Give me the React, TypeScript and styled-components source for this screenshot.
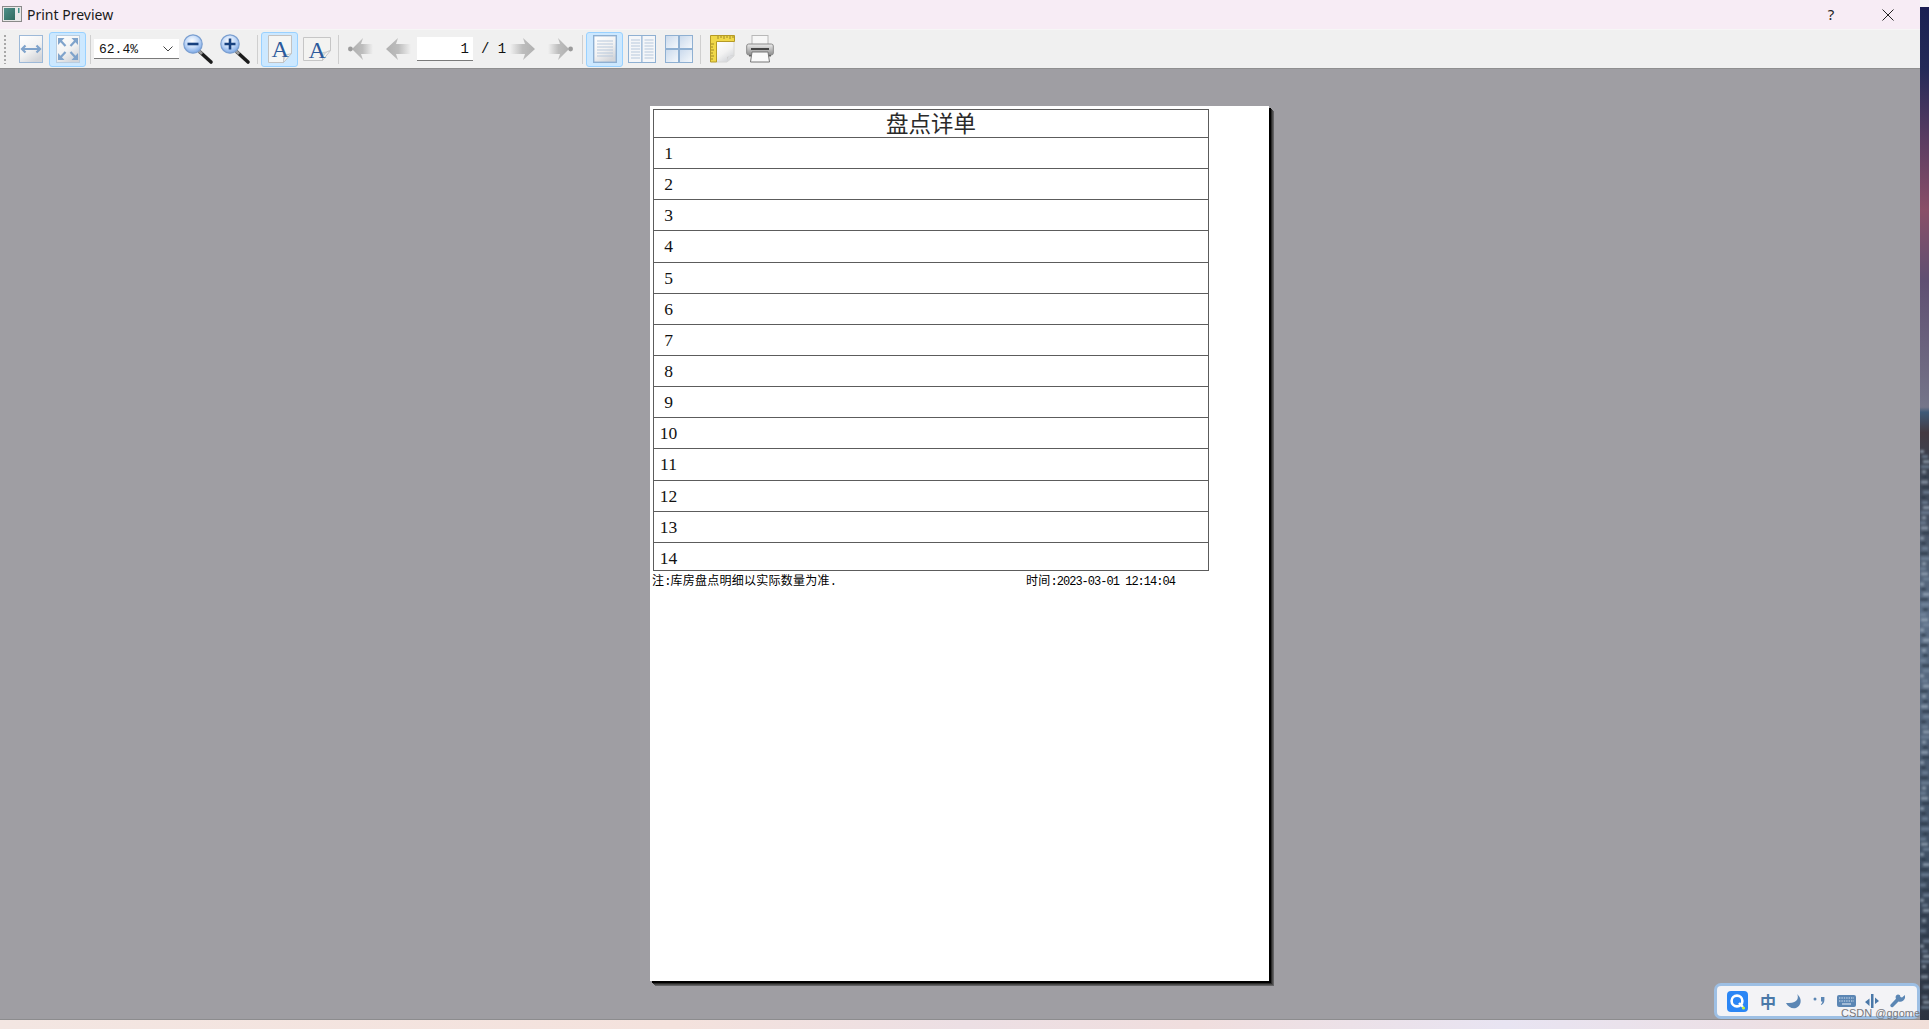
import React from "react";
import styled, { createGlobalStyle } from "styled-components";

const Global = createGlobalStyle`
  html, body { margin: 0; padding: 0; background: #f6f6f6; overflow: hidden; }
  #root { width: 1929px; height: 1029px; }
`;

const Desktop = styled.div`
  display: grid;
  grid-template-columns: 1920px 9px;
  grid-template-rows: 1020px 9px;
  width: 1929px;
  height: 1029px;
  position: relative;
  overflow: hidden;
`;
const Window = styled.div`
  display: flex;
  flex-direction: column;
  min-width: 0;
`;
const TitleBar = styled.div`
  flex: 0 0 29px;
  display: flex;
  align-items: center;
  background: #f7ecf5;
  padding-left: 2px;
  font: 14px/29px "Noto Sans", sans-serif;
  color: #1a1a1a;
`;
const TitleText = styled.span`
  margin-left: 5px;
  flex: 1;
`;
const TitleButton = styled.div<{ $w: number }>`
  width: ${(p) => p.$w}px;
  height: 29px;
  display: flex;
  align-items: center;
  justify-content: center;
  font-size: 15px;
  color: #222;
`;
const Toolbar = styled.div`
  flex: 0 0 auto;
  height: 38px;
  margin-top: 1px;
  display: flex;
  align-items: center;
  background: #f0f0f0;
  padding-left: 4px;
  border-bottom: 1px solid #8f8f90;
`;
const Grip = styled.div`
  width: 2px;
  height: 29px;
  margin-right: 6px;
  background: repeating-linear-gradient(to bottom, #a8a8a8 0 2px, transparent 2px 4px);
`;
const ToolButton = styled.div<{ $active?: boolean }>`
  width: 37px;
  height: 35px;
  box-sizing: border-box;
  display: flex;
  align-items: center;
  justify-content: center;
  border-radius: 3px;
  border: 1px solid ${(p) => (p.$active ? "#99d1ff" : "transparent")};
  background: ${(p) => (p.$active ? "#cce8ff" : "transparent")};
`;
const Separator = styled.div<{ $w: number }>`
  width: ${(p) => p.$w}px;
  height: 29px;
  display: flex;
  justify-content: center;
  &::before {
    content: "";
    width: 1px;
    background: #cfcfcf;
  }
`;
const Combo = styled.div`
  width: 85px;
  height: 20px;
  box-sizing: border-box;
  display: flex;
  align-items: center;
  justify-content: space-between;
  padding: 1px 6px 0 5px;
  background: #fff;
  border-bottom: 1px solid #7a7a7a;
  font: 13px "Liberation Mono", monospace;
  color: #111;
`;
const PageField = styled.div`
  width: 56px;
  height: 24px;
  box-sizing: border-box;
  margin-left: 1px;
  padding-right: 4px;
  background: #fff;
  border-bottom: 1px solid #7a7a7a;
  text-align: right;
  font: 14px/24px "Liberation Mono", monospace;
  color: #111;
`;
const PageCount = styled.div`
  width: 31px;
  box-sizing: border-box;
  padding-left: 8px;
  font: 14px "Liberation Mono", monospace;
  color: #111;
  white-space: pre;
`;
const Viewport = styled.div`
  flex: 1;
  display: flex;
  justify-content: center;
  align-items: flex-start;
  padding-top: 37px;
  background: #9f9ea3;
  box-shadow: inset 0 -1px 0 #8c8c8e;
`;
const Paper = styled.div`
  width: 619px;
  height: 875px;
  box-sizing: border-box;
  padding: 3px 0 0 3px;
  margin-right: 1px;
  background: #fff;
  box-shadow: 2px 2px 0 #000, 3px 3px 0 #2a2a2a, 4px 4px 0 #4a4a4a, 5px 5px 0 #636365;
`;
const Sheet = styled.div`
  width: 556px;
  box-sizing: border-box;
  border: 1px solid #5c5c5c;
  font-family: "Liberation Serif", "Noto Sans CJK SC", serif;
  color: #111;
`;
const SheetTitle = styled.div`
  height: 27px;
  text-align: center;
  font: 22.5px/24px "Noto Sans CJK SC", sans-serif;
  color: #2a2a2a;
`;
const Row = styled.div<{ $last?: boolean }>`
  height: ${(p) => (p.$last ? "28px" : "31.15px")};
  box-sizing: border-box;
  border-top: 1px solid #5c5c5c;
  overflow: hidden;
`;
const RowLabel = styled.div`
  width: 29px;
  text-align: center;
  font-size: 17.5px;
  line-height: 30px;
`;
const Footnotes = styled.div`
  display: grid;
  grid-template-columns: 374px auto;
  justify-content: start;
  height: 20px;
  margin-left: -1px;
  align-items: center;
  color: #000;
`;
const Note = styled.div`
  display: flex;
  align-items: baseline;
  white-space: pre;
`;
const NoteCjk = styled.span`
  font: 12px/16px "Noto Sans CJK SC", sans-serif;
  letter-spacing: 0.25px;
`;
const NoteMono = styled.span`
  font: 12px/16px "Liberation Mono", monospace;
  letter-spacing: -0.98px;
`;
const Wallpaper = styled.div`
  margin-top: 7px;
  overflow: hidden;
`;
const WallpaperArt = styled.svg`
  display: block;
`;
const Taskbar = styled.div`
  grid-column: 1 / -1;
  background: linear-gradient(90deg, #f3e6e2 0%, #f4e2dd 35%, #ecdfe4 50%, #f0dede 62%, #e8e4f2 78%, #ece0e6 90%, #f1dfd9 100%);
`;
const ImeBar = styled.div`
  position: absolute;
  left: 1714px;
  top: 983px;
  width: 206px;
  height: 36px;
  box-sizing: border-box;
  display: flex;
  align-items: center;
  padding-left: 10px;
  background: #f3f3f6;
  border: 3px solid #9dbfe4;
  border-radius: 7px;
`;
const ImeLogoSlot = styled.div`
  margin-right: 5px;
  display: flex;
`;
const ImeItem = styled.div<{ $w: number }>`
  width: ${(p) => p.$w}px;
  display: flex;
  justify-content: center;
  align-items: center;
  font: 700 16px "Noto Sans CJK SC", sans-serif;
  color: #4a78a8;
`;
const Watermark = styled.div`
  position: absolute;
  left: 124px;
  top: 21px;
  font: 11px/13px "Liberation Sans", sans-serif;
  color: #77777c;
  white-space: nowrap;
`;

const Ico = styled.svg`
  display: block;
  overflow: visible;
`;

const Defs = () => (
  <svg width="0" height="0" style={{ position: "absolute" }}>
    <defs>
      <linearGradient id="pageG" x1="0" y1="0" x2="0.6" y2="1">
        <stop offset="0" stopColor="#ffffff" />
        <stop offset="0.6" stopColor="#f2f2f2" />
        <stop offset="1" stopColor="#d4d6da" />
      </linearGradient>
      <linearGradient id="cellG" x1="0" y1="0" x2="1" y2="1">
        <stop offset="0" stopColor="#c9d9ec" />
        <stop offset="1" stopColor="#f6f9fc" />
      </linearGradient>
      <linearGradient id="greyL" x1="0" y1="0" x2="1" y2="0">
        <stop offset="0" stopColor="#b0b0b0" />
        <stop offset="0.5" stopColor="#bdbdbd" />
        <stop offset="1" stopColor="#f0f0f0" />
      </linearGradient>
      <radialGradient id="lens" cx="0.45" cy="0.35" r="0.7">
        <stop offset="0" stopColor="#ffffff" />
        <stop offset="0.5" stopColor="#c4daf8" />
        <stop offset="1" stopColor="#6f9fe2" />
      </radialGradient>
      <linearGradient id="winG" x1="0" y1="0" x2="1" y2="1">
        <stop offset="0" stopColor="#4f8f8a" />
        <stop offset="1" stopColor="#2f6a5e" />
      </linearGradient>
      <linearGradient id="printG" x1="0" y1="0" x2="0" y2="1">
        <stop offset="0" stopColor="#ececec" />
        <stop offset="1" stopColor="#8e8e8e" />
      </linearGradient>
      <filter id="soft" x="-10%" y="-10%" width="120%" height="120%">
        <feGaussianBlur stdDeviation="0.45" />
      </filter>
      <filter id="softer" x="-10%" y="-10%" width="120%" height="120%">
        <feGaussianBlur stdDeviation="0.3" />
      </filter>
      <filter id="seaBlur" x="-10%" y="-1%" width="120%" height="102%">
        <feGaussianBlur stdDeviation="0.8" />
      </filter>
    </defs>
  </svg>
);

const WindowIcon = () => (
  <Ico width="20" height="17" viewBox="0 0 20 17">
    <rect x="0.5" y="0.5" width="19" height="15" fill="#e8e8e8" stroke="#8a8a8a" />
    <rect x="2" y="2" width="11" height="12" fill="url(#winG)" />
    <rect x="16" y="2" width="1.5" height="5" fill="#3f8f88" />
  </Ico>
);

const FitWidthIcon = () => (
  <Ico width="24" height="28" viewBox="0 0 24 28" filter="url(#softer)">
    <rect x="0.5" y="0.5" width="23" height="27" fill="url(#pageG)" stroke="#9db9d8" />
    <path d="M3 14h18M6.500 10.500 3 14l3.500 3.500M17.500 10.500 21 14l-3.500 3.500" fill="none" stroke="#7fa3cb" strokeWidth="2.2" />
  </Ico>
);
const FitPageIcon = () => (
  <Ico width="24" height="28" viewBox="0 0 24 28" filter="url(#softer)">
    <rect x="0.5" y="0.5" width="23" height="27" fill="url(#pageG)" stroke="#b9cde0" />
    <path d="M3 4l6.500 7M21 4l-6.500 7M3 24l6.500-7M21 24l-6.500-7" fill="none" stroke="#7fa3cb" strokeWidth="2.2" />
    <path d="M2 3h6.500L2 10ZM22 3h-6.500L22 10ZM2 25h6.500L2 18ZM22 25h-6.500L22 18Z" fill="#7fa3cb" />
  </Ico>
);
const ZoomIcon = ({ plus }: { plus?: boolean }) => (
  <Ico width="31" height="30" viewBox="0 0 31 30">
    <path d="M18 18 29 28" stroke="#1c1c1c" strokeWidth="3.6" strokeLinecap="round" />
    <path d="M17 17 20 20" stroke="#9a9a9a" strokeWidth="3" />
    <circle cx="11" cy="10" r="9.2" fill="url(#lens)" stroke="#7b9fd0" strokeWidth="1.2" />
    <path d={plus ? "M5.500 10h11M11 4.500v11" : "M5.500 10h11"} stroke="#17417f" strokeWidth="2.6" />
  </Ico>
);
const serifA = { fontFamily: "'Liberation Serif', serif", fill: "#2b5a9c" } as const;
const PortraitIcon = () => (
  <Ico width="24" height="28" viewBox="0 0 24 28">
    <path d="M.5.5h23v18l-8 9H.5Z" fill="#f5f5f3" stroke="#c2c2c2" />
    <path d="M15.500 27.500c0-5 3-8 8-9-2 1-6 1-8 1Z" fill="#dcdcdc" stroke="#bdbdbd" strokeWidth=".6" />
    <text x="3.500" y="21.500" fontSize="24" style={serifA}>A</text>
  </Ico>
);
const LandscapeIcon = () => (
  <Ico width="28" height="24" viewBox="0 0 28 24">
    <path d="M.5.5h27v13l-8 10H.5Z" fill="#f3f3f1" stroke="#c6c6c6" />
    <path d="M19.500 23.500c0-5 3-9 8-10-2 1-6 2-8 2Z" fill="#dcdcdc" stroke="#bdbdbd" strokeWidth=".6" />
    <text x="5.500" y="20.500" fontSize="24" style={serifA}>A</text>
  </Ico>
);
const ArrowIcon = ({ dir, end }: { dir: "l" | "r"; end?: boolean }) => {
  const body = end
    ? "M4 11 15 0 13 6H25V16H13L15 22Z"
    : "M1 11 13 0 11 6H26V16H11L13 22Z";
  return (
    <Ico width="26" height="22" viewBox="0 0 26 22" filter="url(#soft)">
      <g transform={dir === "r" ? "matrix(-1 0 0 1 26 0)" : undefined}>
        <path d={body} fill="url(#greyL)" />
        {end && <circle cx="2.400" cy="11" r="2.400" fill="#9c9c9c" />}
      </g>
    </Ico>
  );
};
const lines = (x: number, w: number, ys: number[]) =>
  ys.map((y) => <path key={`${x}-${y}`} d={`M${x} ${y}h${w}`} stroke="#b7c8dc" strokeWidth="1" />);
const SingleIcon = () => (
  <Ico width="24" height="28" viewBox="0 0 24 28" filter="url(#softer)">
    <rect x="0.7" y="0.7" width="22.6" height="26.6" fill="url(#pageG)" stroke="#8fb0d2" strokeWidth="1.4" />
    {lines(4, 16, [6, 9, 12, 15, 18, 21])}
  </Ico>
);
const FacingIcon = () => (
  <Ico width="28" height="28" viewBox="0 0 28 28" filter="url(#softer)">
    <rect x="0.5" y="0.5" width="13.500" height="27" fill="#f4f6f9" stroke="#8fb0d2" />
    <rect x="14" y="0.5" width="13.500" height="27" fill="#f4f6f9" stroke="#8fb0d2" />
    {lines(3, 9, [5, 8, 11, 14, 17, 20, 23])}
    {lines(16.5, 9, [5, 8, 11, 14, 17, 20, 23])}
  </Ico>
);
const GridIcon = () => {
  const cells = [[0.5, 0.5], [14.5, 0.5], [0.5, 14.5], [14.5, 14.5]];
  return (
    <Ico width="28" height="28" viewBox="0 0 28 28" filter="url(#softer)">
      {cells.map(([x, y]) => (
        <rect key={`${x}${y}`} x={x} y={y} width="13" height="13" fill="url(#cellG)" stroke="#8fb0d2" />
      ))}
    </Ico>
  );
};
const SetupIcon = () => (
  <Ico width="25" height="28" viewBox="0 0 25 28" filter="url(#softer)">
    <path d="M6 6h18v15l-7 6H6Z" fill="url(#pageG)" stroke="#d8d8d8" />
    <path d="M17 27c0-4 2-7 7-7-1 1-5 1-7 2Z" fill="#cfcfcf" />
    <path d="M.5.5h24v6H6.500v20.500h-6Z" fill="#f0d84a" stroke="#b59a28" />
    <path d="M8 1v3M11 1v2M14 1v3M17 1v2M20 1v3M23 1v2M1 9h3M1 12h2M1 15h3M1 18h2M1 21h3M1 24h2" stroke="#8a7720" strokeWidth=".8" />
  </Ico>
);
const PrintIcon = () => (
  <Ico width="28" height="28" viewBox="0 0 28 28" filter="url(#softer)">
    <rect x="6" y="0.5" width="16" height="11" fill="#f7f7f7" stroke="#b8b8b8" />
    <rect x="0.7" y="9" width="26.6" height="11" rx="2" fill="url(#printG)" stroke="#8a8a8a" />
    <rect x="5" y="13" width="18" height="2" fill="#444" />
    <path d="M3 20h22v1.500H3Z" fill="#666" />
    <path d="M6 17h16l1.500 10h-19Z" fill="#fafafa" stroke="#777" strokeWidth="1" />
  </Ico>
);
const Chevron = () => (
  <Ico width="10" height="6" viewBox="0 0 10 6">
    <path d="M.5.5 5 5 9.500.5" fill="none" stroke="#444" />
  </Ico>
);
const CloseIcon = () => (
  <Ico width="12" height="12" viewBox="0 0 12 12">
    <path d="M.5.5l11 11M11.500.5l-11 11" stroke="#222" strokeWidth="1" />
  </Ico>
);

// sea texture for the sliver of desktop wallpaper
const seaRows = Array.from({ length: 110 }, (_, i) => {
  const a = (i * 7919) % 97;
  return {
    y: 450 + i * 5.1,
    x: a % 4,
    w: 4 + (a % 6),
    c: a % 3 === 0 ? "#a9b8c8" : a % 3 === 1 ? "#2c3846" : "#7d90a6",
  };
});
const WallpaperSlice = () => (
  <WallpaperArt width="9" height="1013" viewBox="0 7 9 1013">
    <defs>
      <linearGradient id="sky" x1="0" y1="0" x2="0" y2="1">
        <stop offset="0" stopColor="#1a2152" />
        <stop offset="0.06" stopColor="#232a58" />
        <stop offset="0.13" stopColor="#5a3c62" />
        <stop offset="0.2" stopColor="#8a4f68" />
        <stop offset="0.27" stopColor="#5f4f72" />
        <stop offset="0.36" stopColor="#6f6a82" />
        <stop offset="0.395" stopColor="#75768a" />
        <stop offset="0.4" stopColor="#3f5a78" />
        <stop offset="0.42" stopColor="#443a42" />
        <stop offset="0.45" stopColor="#3a4250" />
        <stop offset="0.6" stopColor="#5d7088" />
        <stop offset="0.85" stopColor="#3f5064" />
        <stop offset="1" stopColor="#2c3340" />
      </linearGradient>
    </defs>
    <rect x="0" y="7" width="9" height="1013" fill="url(#sky)" />
    <g filter="url(#seaBlur)" opacity="0.65">
      {seaRows.map((r) => (
        <rect key={r.y} x={r.x} y={r.y} width={r.w} height="3" fill={r.c} />
      ))}
    </g>
  </WallpaperArt>
);

const ImeLogo = () => (
  <Ico width="21" height="21" viewBox="0 0 21 21">
    <rect width="21" height="21" rx="4" fill="#2b86f5" />
    <circle cx="10" cy="10" r="5.400" fill="none" stroke="#fff" strokeWidth="2.6" />
    <path d="M12 12l4 4" stroke="#fff" strokeWidth="2.4" />
    <circle cx="16.500" cy="17" r="1.600" fill="#c5f23a" />
  </Ico>
);
const MoonIcon = () => (
  <Ico width="16" height="15" viewBox="0 0 16 15">
    <path d="M11 0c2 3 1 9-8 9l-3 0c2 4 6 6 10 5 5-2 7-9 1-14Z" fill="#5b86b4" />
  </Ico>
);
const QuoteIcon = () => (
  <Ico width="12" height="10" viewBox="0 0 12 10">
    <circle cx="2" cy="3" r="1.500" fill="#5b86b4" />
    <path d="M8 1h3.400v3c0 2-1 4-3 5l-.6-.8c1-.7 1.600-1.600 1.600-2.700H8Z" fill="#5b86b4" />
  </Ico>
);
const KeyboardIcon = () => (
  <Ico width="19" height="12" viewBox="0 0 19 12">
    <rect width="19" height="12" rx="2" fill="#5b86b4" />
    <path d="M2 3h15M2 6h15" stroke="#d6e2ef" strokeWidth="1" strokeDasharray="1.4 1" />
    <path d="M5 9h9" stroke="#d6e2ef" strokeWidth="1.2" />
  </Ico>
);
const SplitIcon = () => (
  <Ico width="14" height="14" viewBox="0 0 14 14">
    <path d="M8.500 0v14h-2.500V0Z" fill="#4a78a8" />
    <path d="M0 8l4.500-3.500V12Z M14 7l-4-3.500V10Z" fill="#4a78a8" />
  </Ico>
);
const WrenchIcon = () => (
  <Ico width="16" height="15" viewBox="0 0 16 15">
    <path d="M15 1l-3 2.500-1.600-.6L10 1.200C8-.3 5.800.6 5.600 3c0 .8.1 1.300.4 1.800L.6 10.500c-1.200 1.500.9 3.700 2.400 2.400L8.500 7.400c2.500.9 5.600-.2 6.500-3.400Z" fill="#5b86b4" />
  </Ico>
);

const ROWS = Array.from({ length: 14 }, (_, i) => i + 1);

export default function App() {
  return (
    <>
      <Global />
      <Defs />
      <Desktop>
        <Window>
          <TitleBar>
            <WindowIcon />
            <TitleText>Print Preview</TitleText>
            <TitleButton $w={50}>?</TitleButton>
            <TitleButton $w={64}>
              <CloseIcon />
            </TitleButton>
          </TitleBar>
          <Toolbar>
            <Grip />
            <ToolButton><FitWidthIcon /></ToolButton>
            <ToolButton $active><FitPageIcon /></ToolButton>
            <Separator $w={8} />
            <Combo>
              <span>62.4%</span>
              <Chevron />
            </Combo>
            <ToolButton><ZoomIcon /></ToolButton>
            <ToolButton><ZoomIcon plus /></ToolButton>
            <Separator $w={8} />
            <ToolButton $active><PortraitIcon /></ToolButton>
            <ToolButton><LandscapeIcon /></ToolButton>
            <Separator $w={7} />
            <ToolButton><ArrowIcon dir="l" end /></ToolButton>
            <ToolButton><ArrowIcon dir="l" /></ToolButton>
            <PageField>1</PageField>
            <PageCount>{"/ 1"}</PageCount>
            <ToolButton><ArrowIcon dir="r" /></ToolButton>
            <ToolButton><ArrowIcon dir="r" end /></ToolButton>
            <Separator $w={8} />
            <ToolButton $active><SingleIcon /></ToolButton>
            <ToolButton><FacingIcon /></ToolButton>
            <ToolButton><GridIcon /></ToolButton>
            <Separator $w={7} />
            <ToolButton><SetupIcon /></ToolButton>
            <ToolButton><PrintIcon /></ToolButton>
          </Toolbar>
          <Viewport>
            <Paper>
              <Sheet>
                <SheetTitle>盘点详单</SheetTitle>
                {ROWS.map((n) => (
                  <Row key={n} $last={n === 14}>
                    <RowLabel>{n}</RowLabel>
                  </Row>
                ))}
              </Sheet>
              <Footnotes>
                <Note>
                  <NoteCjk>注</NoteCjk>
                  <NoteMono>:</NoteMono>
                  <NoteCjk>库房盘点明细以实际数量为准</NoteCjk>
                  <NoteMono>.</NoteMono>
                </Note>
                <Note>
                  <NoteCjk>时间</NoteCjk>
                  <NoteMono>:2023-03-01 12:14:04</NoteMono>
                </Note>
              </Footnotes>
            </Paper>
          </Viewport>
        </Window>
        <Wallpaper>
          <WallpaperSlice />
        </Wallpaper>
        <Taskbar />
        <ImeBar>
          <ImeLogoSlot><ImeLogo /></ImeLogoSlot>
          <ImeItem $w={30}>中</ImeItem>
          <ImeItem $w={22}><MoonIcon /></ImeItem>
          <ImeItem $w={28}><QuoteIcon /></ImeItem>
          <ImeItem $w={26}><KeyboardIcon /></ImeItem>
          <ImeItem $w={26}><SplitIcon /></ImeItem>
          <ImeItem $w={26}><WrenchIcon /></ImeItem>
          <Watermark>CSDN @ggome</Watermark>
        </ImeBar>
      </Desktop>
    </>
  );
}
